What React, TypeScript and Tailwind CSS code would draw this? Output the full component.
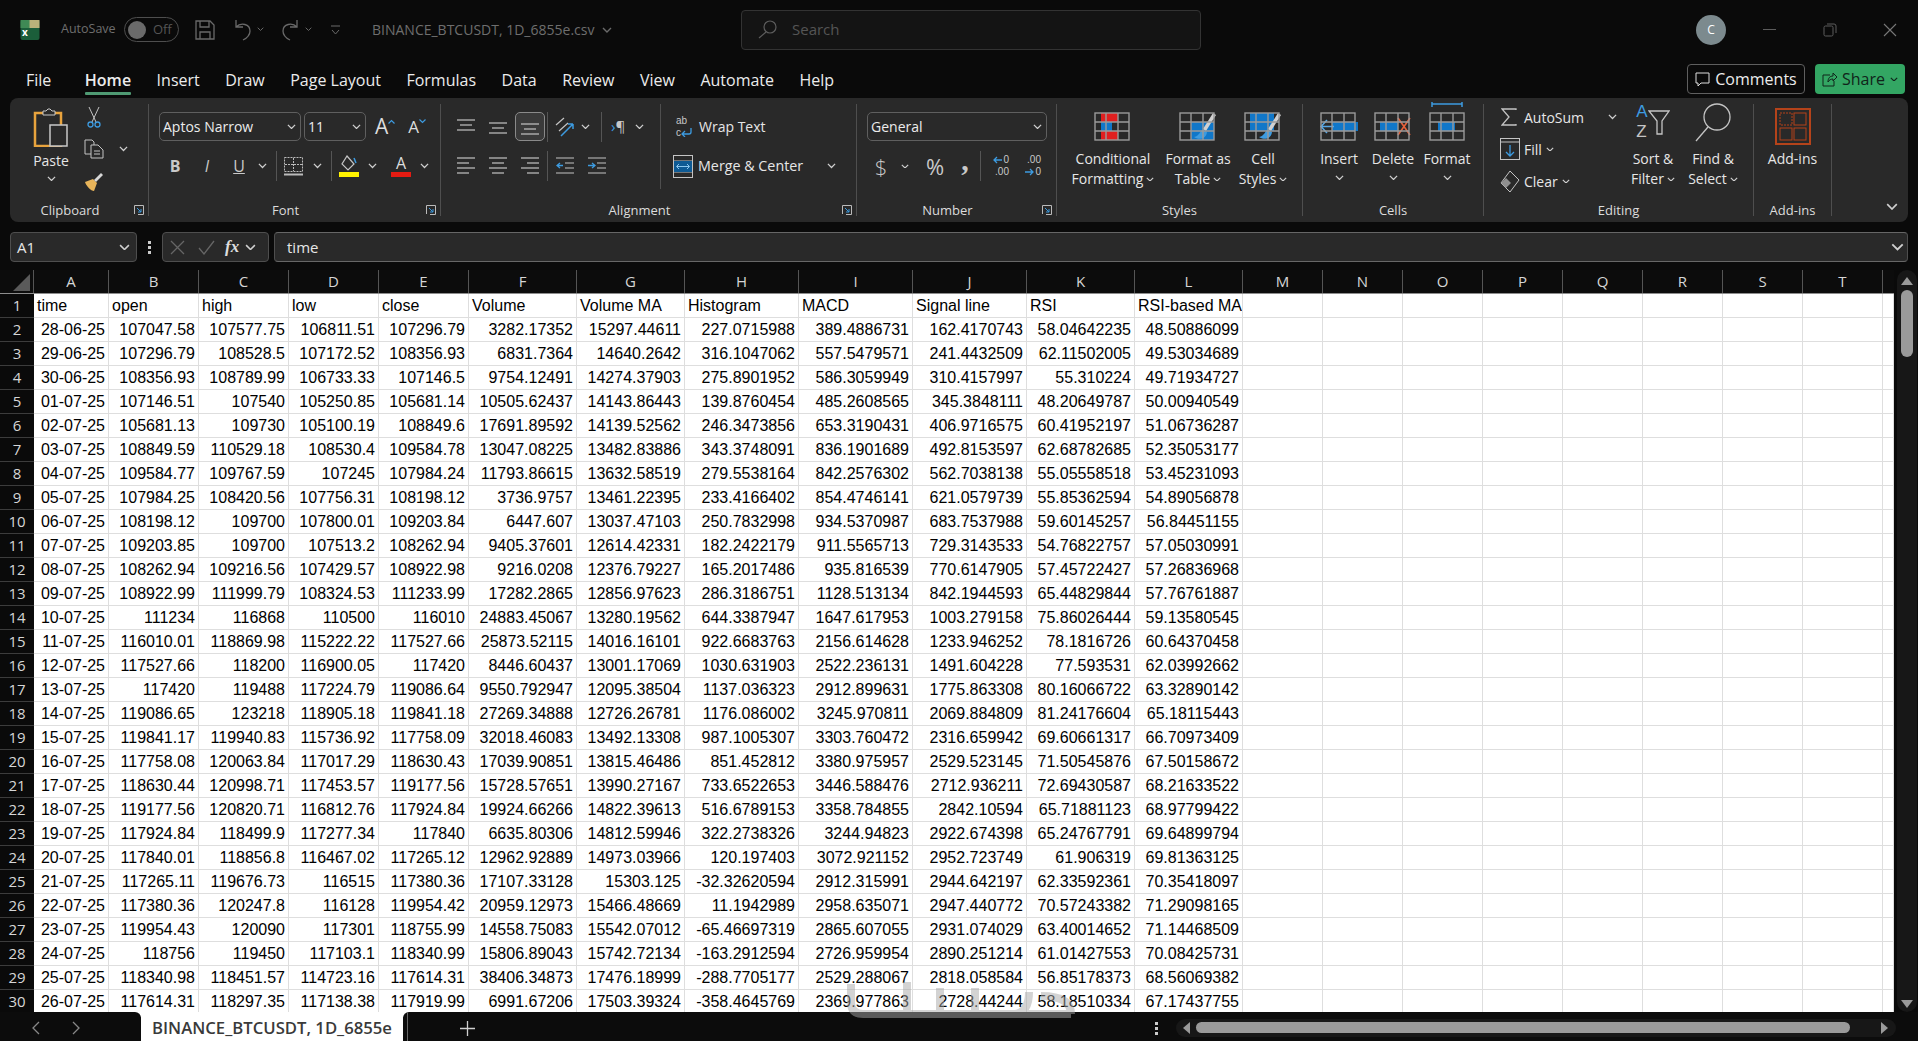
import React from 'react';

const UI = "font-['Open_Sans',sans-serif]";
const CELL = "font-['Liberation_Sans',Arial,sans-serif]";
const COLS = 'grid grid-cols-[34px_75px_90px_90px_90px_90px_108px_108px_114px_114px_114px_108px_108px_repeat(8,80px)_11px]';

const HEAD = ['A', 'B', 'C', 'D', 'E', 'F', 'G', 'H', 'I', 'J', 'K', 'L', 'M', 'N', 'O', 'P', 'Q', 'R', 'S', 'T', ''];
const TITLES = ['time', 'open', 'high', 'low', 'close', 'Volume', 'Volume MA', 'Histogram', 'MACD', 'Signal line', 'RSI', 'RSI-based MA'];

const DATA = `28-06-25 107047.58 107577.75 106811.51 107296.79 3282.17352 15297.44611 227.0715988 389.4886731 162.4170743 58.04642235 48.50886099
29-06-25 107296.79 108528.5 107172.52 108356.93 6831.7364 14640.2642 316.1047062 557.5479571 241.4432509 62.11502005 49.53034689
30-06-25 108356.93 108789.99 106733.33 107146.5 9754.12491 14274.37903 275.8901952 586.3059949 310.4157997 55.310224 49.71934727
01-07-25 107146.51 107540 105250.85 105681.14 10505.62437 14143.86443 139.8760454 485.2608565 345.3848111 48.20649787 50.00940549
02-07-25 105681.13 109730 105100.19 108849.6 17691.89592 14139.52562 246.3473856 653.3190431 406.9716575 60.41952197 51.06736287
03-07-25 108849.59 110529.18 108530.4 109584.78 13047.08225 13482.83886 343.3748091 836.1901689 492.8153597 62.68782685 52.35053177
04-07-25 109584.77 109767.59 107245 107984.24 11793.86615 13632.58519 279.5538164 842.2576302 562.7038138 55.05558518 53.45231093
05-07-25 107984.25 108420.56 107756.31 108198.12 3736.9757 13461.22395 233.4166402 854.4746141 621.0579739 55.85362594 54.89056878
06-07-25 108198.12 109700 107800.01 109203.84 6447.607 13037.47103 250.7832998 934.5370987 683.7537988 59.60145257 56.84451155
07-07-25 109203.85 109700 107513.2 108262.94 9405.37601 12614.42331 182.2422179 911.5565713 729.3143533 54.76822757 57.05030991
08-07-25 108262.94 109216.56 107429.57 108922.98 9216.0208 12376.79227 165.2017486 935.816539 770.6147905 57.45722427 57.26836968
09-07-25 108922.99 111999.79 108324.53 111233.99 17282.2865 12856.97623 286.3186751 1128.513134 842.1944593 65.44829844 57.76761887
10-07-25 111234 116868 110500 116010 24883.45067 13280.19562 644.3387947 1647.617953 1003.279158 75.86026444 59.13580545
11-07-25 116010.01 118869.98 115222.22 117527.66 25873.52115 14016.16101 922.6683763 2156.614628 1233.946252 78.1816726 60.64370458
12-07-25 117527.66 118200 116900.05 117420 8446.60437 13001.17069 1030.631903 2522.236131 1491.604228 77.593531 62.03992662
13-07-25 117420 119488 117224.79 119086.64 9550.792947 12095.38504 1137.036323 2912.899631 1775.863308 80.16066722 63.32890142
14-07-25 119086.65 123218 118905.18 119841.18 27269.34888 12726.26781 1176.086002 3245.970811 2069.884809 81.24176604 65.18115443
15-07-25 119841.17 119940.83 115736.92 117758.09 32018.46083 13492.13308 987.1005307 3303.760472 2316.659942 69.60661317 66.70973409
16-07-25 117758.08 120063.84 117017.29 118630.43 17039.90851 13815.46486 851.452812 3380.975957 2529.523145 71.50545876 67.50158672
17-07-25 118630.44 120998.71 117453.57 119177.56 15728.57651 13990.27167 733.6522653 3446.588476 2712.936211 72.69430587 68.21633522
18-07-25 119177.56 120820.71 116812.76 117924.84 19924.66266 14822.39613 516.6789153 3358.784855 2842.10594 65.71881123 68.97799422
19-07-25 117924.84 118499.9 117277.34 117840 6635.80306 14812.59946 322.2738326 3244.94823 2922.674398 65.24767791 69.64899794
20-07-25 117840.01 118856.8 116467.02 117265.12 12962.92889 14973.03966 120.197403 3072.921152 2952.723749 61.906319 69.81363125
21-07-25 117265.11 119676.73 116515 117380.36 17107.33128 15303.125 -32.32620594 2912.315991 2944.642197 62.33592361 70.35418097
22-07-25 117380.36 120247.8 116128 119954.42 20959.12973 15466.48669 11.1942989 2958.635071 2947.440772 70.57243382 71.29098165
23-07-25 119954.43 120090 117301 118755.99 14558.75083 15542.07012 -65.46697319 2865.607055 2931.074029 63.40014652 71.14468509
24-07-25 118756 119450 117103.1 118340.99 15806.89043 15742.72134 -163.2912594 2726.959954 2890.251214 61.01427553 70.08425731
25-07-25 118340.98 118451.57 114723.16 117614.31 38406.34873 17476.18999 -288.7705177 2529.288067 2818.058584 56.85178373 68.56069382
26-07-25 117614.31 118297.35 117138.38 117919.99 6991.67206 17503.39324 -358.4645769 2369.977863 2728.44244 58.18510334 67.17437755`
  .split('\n')
  .map(r => r.split(' '));

const BLUE = '#3d9be0';
const GREY = '#c4c4c4';

const Chev = ({ className = '', color = '#d0d0d0', w = 9 }: { className?: string; color?: string; w?: number }) => (
  <svg width={w} height={w * 0.6} viewBox="0 0 10 6" className={`shrink-0 ${className}`}>
    <path d="M1 1l4 4 4-4" fill="none" stroke={color} strokeWidth="1.4" />
  </svg>
);

const Sep = ({ className = '' }: { className?: string }) => <div className={`w-px h-[30px] bg-[#555] shrink-0 ${className}`} />;

const Lines = ({ rows, className = '', w = 18 }: { rows: [number, number, number][]; className?: string; w?: number }) => (
  <svg width={w} height="20" viewBox="0 0 18 20" className={`shrink-0 ${className}`}>
    {rows.map((r, i) => (
      <path key={i} d={`M${r[0]} ${r[2]}H${r[1]}`} stroke={GREY} strokeWidth="1.2" />
    ))}
  </svg>
);

const Launcher = () => (
  <svg width="10" height="10" viewBox="0 0 10 10" className="mx-[4px] mt-[5px] shrink-0">
    <path d="M.5 9V.5H9.5V9.5H4" fill="none" stroke="#bbb" />
    <path d="M3 3l4 4M7 4v3H4" fill="none" stroke={BLUE} />
  </svg>
);

const Footer = ({ label, launcher }: { label: string; launcher?: boolean }) => (
  <div className="h-[20px] pt-[4px] flex text-[13px] leading-[20px] text-[#dcdcdc]">
    <span className="flex-1 text-center">{label}</span>
    {launcher && <Launcher />}
  </div>
);

const Combo = ({ text, className }: { text: string; className: string }) => (
  <div className={`h-[29px] flex items-center justify-between pl-[3px] pr-[4px] border border-[#5f5f5f] rounded-[5px] text-[14px] text-[#ececec] ${className}`}>
    <span>{text}</span>
    <Chev />
  </div>
);

const BigBtn = ({ w, icon, lines, arrow }: { w: string; icon: React.ReactNode; lines: string[]; arrow?: 'inline' | 'below' }) => (
  <div className={`flex flex-col items-center text-[14px] leading-[20px] text-[#e6e6e6] ${w}`}>
    <div className="h-[45px] flex items-end pb-[9px]">{icon}</div>
    {lines.map((l, i) => (
      <div key={l} className="flex items-center gap-[3px] whitespace-nowrap">
        {l}
        {arrow === 'inline' && i === lines.length - 1 && <Chev w={8} />}
      </div>
    ))}
    {arrow === 'below' && <Chev className="mt-[6px]" />}
  </div>
);

const GridIcon = ({ children }: { children?: React.ReactNode }) => (
  <svg width="38" height="40" viewBox="0 0 38 40" className="-mb-[1px]">
    {children}
    <g fill="none" stroke="#9a9a9a" strokeWidth="1.4">
      <rect x="1" y="12" width="34" height="27" />
      <path d="M12 12v27M24 12v27M1 21h34M1 30h34" />
    </g>
  </svg>
);

const Brush = () => (
  <g>
    <path d="M37 14L27 30l-3-2L34 12z" fill="#d0d0d0" />
    <path d="M24 29c-3 0-3 6-9 7 4 3 12 3 13-5z" fill={BLUE} />
  </g>
);

function TitleBar() {
  return (
    <div className="h-[50px] pt-[9px] flex items-center text-[#6e6e6e]">
      <svg width="20" height="20" viewBox="0 0 20 20" className="ml-[20px] shrink-0">
        <rect x="0.5" width="19" height="20" rx="2" fill="#1b5e3a" />
        <rect x="6" width="13.5" height="8" fill="#b9b27a" />
        <rect x="0.5" y="0" width="9" height="8" fill="#3f8a55" />
        <text x="2" y="16" fontSize="10" fontWeight="700" fill="#fff">x</text>
      </svg>
      <span className="ml-[21px] w-[54px] text-[12.5px]">AutoSave</span>
      <div className="ml-[9px] w-[55px] h-[25px] rounded-full border border-[#4e4e4e] flex items-center pl-[3px] gap-[7px]">
        <div className="w-[18px] h-[18px] rounded-full bg-[#6a6a6a]" />
        <span className="text-[13px] text-[#555]">Off</span>
      </div>
      <svg width="20" height="20" viewBox="0 0 20 20" className="ml-[16px]" fill="none" stroke="#6a6a6a" strokeWidth="1.3">
        <path d="M1 1h14l4 4v14H1zM5 1v6h9V1M5 19v-7h10v7" />
      </svg>
      <svg width="25" height="22" viewBox="0 0 25 22" className="ml-[15px]" fill="none" stroke="#6a6a6a" strokeWidth="1.3">
        <path d="M6 1v7h7M6 8c5-5 14-3 14 4 0 4-3 7-7 9" />
      </svg>
      <Chev className="ml-[2px]" color="#6a6a6a" w={7} />
      <svg width="25" height="22" viewBox="0 0 25 22" className="ml-[14px]" fill="none" stroke="#6a6a6a" strokeWidth="1.3">
        <path d="M19 1v7h-7M19 8C14 3 5 5 5 12c0 4 3 7 7 9" />
      </svg>
      <Chev className="ml-[2px]" color="#6a6a6a" w={7} />
      <svg width="9" height="10" viewBox="0 0 9 10" className="ml-[19px]" fill="none" stroke="#6a6a6a">
        <path d="M0 1h9M1 5l3.500 4 3.500-4" />
      </svg>
      <span className="ml-[32px] w-[226px] text-[14px] whitespace-nowrap">BINANCE_BTCUSDT, 1D_6855e.csv</span>
      <Chev className="ml-[4px]" color="#6a6a6a" w={10} />
      <div className="ml-[129px] w-[460px] h-[40px] bg-[#141414] border border-[#333] rounded-[4px] flex items-center pl-[16px]">
        <svg width="19" height="19" viewBox="0 0 19 19" fill="none" stroke="#5d5d5d" strokeWidth="1.2">
          <circle cx="12" cy="7" r="6" />
          <path d="M8 12l-7 6" />
        </svg>
        <span className="ml-[15px] text-[15px] text-[#555]">Search</span>
      </div>
      <div className="ml-[495px] w-[30px] h-[30px] rounded-full bg-[#7c8a8e] flex items-center justify-center text-[12px] text-white">C</div>
      <div className="ml-[37px] w-[13px] h-px bg-[#5c5c5c]" />
      <svg width="14" height="14" viewBox="0 0 14 14" className="ml-[47px]" fill="none" stroke="#5c5c5c">
        <rect x="1" y="3" width="9" height="10" rx="1.500" />
        <path d="M4 1h7a2 2 0 012 2v7" />
      </svg>
      <svg width="14" height="14" viewBox="0 0 14 14" className="ml-[46px]" fill="none" stroke="#777" strokeWidth="1.100">
        <path d="M1 1l12 12M13 1L1 13" />
      </svg>
    </div>
  );
}

function TabRow() {
  const tabs = ['File', 'Home', 'Insert', 'Draw', 'Page Layout', 'Formulas', 'Data', 'Review', 'View', 'Automate', 'Help'];
  return (
    <div className="h-[48px] flex pl-[26px] gap-[25.5px] text-[16px] text-[#ececec]">
      {tabs.map(t => (
        <div key={t} className={`flex flex-col pt-[18px] ${t === 'File' ? 'mr-[8px]' : ''}`}>
          <span className={`leading-[24px] whitespace-nowrap ${t === 'Home' ? 'font-semibold' : ''}`}>{t}</span>
          {t === 'Home' && <div className="h-[3px] bg-[#4f9a73] rounded-[1px]" />}
        </div>
      ))}
      <div className="ml-auto flex gap-[10px] pt-[14px] pr-[13px]">
        <div className="w-[118px] h-[30px] border border-[#5f5f5f] rounded-[4px] flex items-center justify-center gap-[5px] text-[16px]">
          <svg width="15" height="15" viewBox="0 0 15 15" fill="none" stroke="#ddd">
            <path d="M1 1h13v10H6l-3 3v-3H1z" />
          </svg>
          Comments
        </div>
        <div className="w-[90px] h-[30px] bg-[#33a663] rounded-[4px] flex items-center justify-center gap-[5px] text-[16px] text-[#10241a]">
          <svg width="15" height="16" viewBox="0 0 15 16" fill="none" stroke="#10241a">
            <path d="M8 4H1v11h11v-5M6 11c0-4 2-6 5-6V2l4 4-4 4V8c-2 0-4 1-5 3z" />
          </svg>
          Share
          <Chev color="#10241a" w={8} />
        </div>
      </div>
    </div>
  );
}

function Clipboard() {
  return (
    <div className="w-[139px] flex flex-col border-r border-[#4e4e4e] text-[#e6e6e6]">
      <div className="flex-1 flex">
        <div className="w-[74px] flex flex-col items-center pl-[8px] pt-[4px] text-[14px] leading-[20px]">
          <svg width="36" height="39" viewBox="0 0 36 39">
            <path d="M2 5h26v33H2z" fill="none" stroke="#e8a33d" strokeWidth="2.500" />
            <path d="M10 6V3h3l2-2h2l2 2h3v4H10z" fill="#2a2a2a" stroke="#c8c8c8" />
            <rect x="17" y="17" width="17" height="21" fill="#2a2a2a" stroke="#c8c8c8" strokeWidth="1.500" />
          </svg>
          <span className="mt-[4px]">Paste</span>
          <Chev className="mt-[5px]" />
        </div>
        <div className="flex flex-col pt-[3px]">
          <svg width="14" height="21" viewBox="0 0 14 21" className="ml-[3px]" fill="none">
            <path d="M2 0l7 15M12 0L5 15" stroke={GREY} />
            <circle cx="3.500" cy="17.500" r="2.500" stroke={BLUE} strokeWidth="1.300" />
            <circle cx="10.500" cy="17.500" r="2.500" stroke={BLUE} strokeWidth="1.300" />
          </svg>
          <div className="flex items-center mt-[11px]">
            <svg width="20" height="20" viewBox="0 0 20 20" fill="none" stroke={GREY}>
              <path d="M7 15H1V1h7l2 2v3M7 6h7l5 5v8H7z" />
              <path d="M10 12h6M10 15h6" />
            </svg>
            <Chev className="ml-[15px]" />
          </div>
          <svg width="20" height="20" viewBox="0 0 20 20" className="mt-[13px]">
            <path d="M1 10l8-3 4 4-3 8C7 19 2 14 1 10z" fill="#e8b45a" />
            <path d="M10 8l7-7 2 2-7 7z" fill="#d8d8d8" />
          </svg>
        </div>
      </div>
      <Footer label="Clipboard" launcher />
    </div>
  );
}

function FontGroup() {
  return (
    <div className="w-[292px] flex flex-col border-r border-[#4e4e4e] text-[#e6e6e6]">
      <div className="flex-1 pt-[8px]">
        <div className="flex items-center pl-[10px]">
          <Combo text="Aptos Narrow" className="w-[142px]" />
          <Combo text="11" className="w-[62px] ml-[3px]" />
          <span className="ml-[9px] text-[21px] leading-none text-[#ddd]">A</span>
          <svg width="7" height="5" viewBox="0 0 7 5" className="mb-[10px]" fill="none" stroke={BLUE} strokeWidth="1.200"><path d="M.5 4.500l3-3 3 3" /></svg>
          <span className="ml-[13px] text-[17px] leading-none text-[#ddd]">A</span>
          <svg width="7" height="5" viewBox="0 0 7 5" className="mb-[10px]" fill="none" stroke={BLUE} strokeWidth="1.200"><path d="M.5.500l3 3 3-3" /></svg>
        </div>
        <div className="flex items-center h-[30px] mt-[10px]">
          <span className="ml-[20px] w-[12px] text-center text-[16px] font-bold text-[#c8c8c8]">B</span>
          <span className="ml-[20px] w-[12px] text-center text-[16px] italic text-[#c8c8c8]">I</span>
          <span className="ml-[20px] w-[12px] text-center text-[16px] underline text-[#c8c8c8]">U</span>
          <Chev className="ml-[13px]" />
          <Sep className="ml-[9px]" />
          <svg width="19" height="19" viewBox="0 0 19 19" className="ml-[7px]" fill="none" stroke="#bbb">
            <path d="M.5.500h18v14H.5z" strokeDasharray="2 1" />
            <path d="M9.500 1v13M1 7.500h17" strokeDasharray="2 1" />
            <path d="M0 17.500h19" strokeWidth="2" />
          </svg>
          <Chev className="ml-[10px]" />
          <Sep className="ml-[9px]" />
          <svg width="20" height="22" viewBox="0 0 20 22" className="ml-[7px]">
            <path d="M8 1l7 8-6 6-6-6z" fill="none" stroke={GREY} strokeWidth="1.200" />
            <path d="M15 3l2 5" stroke={BLUE} strokeWidth="1.500" />
            <rect y="17" width="20" height="5" fill="#fff200" />
          </svg>
          <Chev className="ml-[9px]" />
          <div className="ml-[14px] w-[20px] flex flex-col items-center">
            <span className="text-[16px] leading-[17px] text-[#ddd]">A</span>
            <div className="w-[20px] h-[5px] bg-[#e51b12]" />
          </div>
          <Chev className="ml-[9px]" />
        </div>
      </div>
      <Footer label="Font" launcher />
    </div>
  );
}

function Alignment() {
  return (
    <div className="w-[416px] flex flex-col border-r border-[#4e4e4e] text-[#e6e6e6]">
      <div className="flex-1 flex">
        <div className="w-[220px] pt-[8px] border-r border-[#4e4e4e] h-[85px]">
          <div className="flex items-center h-[29px]">
            <Lines className="ml-[16px]" rows={[[0, 18, 3], [3, 15, 8], [0, 18, 13]]} />
            <Lines className="ml-[14px]" rows={[[0, 18, 6], [3, 15, 11], [0, 18, 16]]} />
            <div className="ml-[8px] w-[30px] h-[29px] rounded-[5px] border border-[#8a8a8a] bg-[#3a3a3a] flex items-center justify-center">
              <Lines rows={[[0, 18, 7], [3, 15, 12], [0, 18, 17]]} />
            </div>
            <Sep className="ml-[2px]" />
            <svg width="20" height="20" viewBox="0 0 20 20" className="ml-[7px]" fill="none">
              <path d="M1 8l8-7M4 14l9-8" stroke={GREY} strokeWidth="1.200" />
              <path d="M6 19L18 7M18 7v5M18 7h-5" stroke={BLUE} strokeWidth="1.500" />
            </svg>
            <Chev className="ml-[6px]" />
            <Sep className="ml-[11px]" />
            <span className="ml-[9px] text-[15px] text-[#c8c8c8] whitespace-nowrap"><span className="text-[#3d9be0]">›</span>¶</span>
            <Chev className="ml-[10px]" />
          </div>
          <div className="flex items-center h-[30px] mt-[10px]">
            <Lines className="ml-[16px]" rows={[[0, 18, 2], [0, 12, 7], [0, 18, 12], [0, 12, 17]]} />
            <Lines className="ml-[14px]" rows={[[0, 18, 2], [3, 15, 7], [0, 18, 12], [3, 15, 17]]} />
            <Lines className="ml-[14px]" rows={[[0, 18, 2], [6, 18, 7], [0, 18, 12], [6, 18, 17]]} />
            <Sep className="ml-[8px]" />
            <svg width="18" height="20" viewBox="0 0 18 20" className="ml-[8px]" fill="none">
              <path d="M0 2h18M9 7h9M9 12h9M0 17h18" stroke={GREY} strokeWidth="1.200" />
              <path d="M7 9.500H1M4 7L1 9.500 4 12" stroke={BLUE} strokeWidth="1.300" />
            </svg>
            <svg width="18" height="20" viewBox="0 0 18 20" className="ml-[14px]" fill="none">
              <path d="M0 2h18M9 7h9M9 12h9M0 17h18" stroke={GREY} strokeWidth="1.200" />
              <path d="M0 9.500h6M4 7l3 2.500L4 12" stroke={BLUE} strokeWidth="1.300" />
            </svg>
          </div>
        </div>
        <div className="pt-[8px] flex-1">
          <div className="flex items-center h-[29px] pl-[15px] text-[14px]">
            <div className="w-[18px] flex flex-col text-[10px] leading-[12px] text-[#c8c8c8] font-['Liberation_Sans',sans-serif]">
              <span>ab</span>
              <div className="flex items-center">
                <span>c</span>
                <svg width="11" height="9" viewBox="0 0 11 9" fill="none" stroke={BLUE} strokeWidth="1.300">
                  <path d="M10 0v4a2 2 0 01-2 2H1M4 3L1 6l3 3" />
                </svg>
              </div>
            </div>
            <span className="ml-[5px]">Wrap Text</span>
          </div>
          <div className="flex items-center h-[30px] mt-[10px] pl-[12px] text-[14px]">
            <svg width="20" height="23" viewBox="0 0 20 23" fill="none">
              <rect x=".5" y=".5" width="19" height="22" stroke={GREY} />
              <path d="M0 6h20M0 17h20" stroke={GREY} />
              <rect x="1" y="6" width="18" height="11" fill="#0e5a94" />
              <path d="M4 11.500h12M6 9l-2.500 2.500L6 14M14 9l2.500 2.500L14 14" stroke="#8cc6ee" />
            </svg>
            <span className="ml-[5px] w-[118px] text-[14.3px] whitespace-nowrap">Merge &amp; Center</span>
            <Chev className="ml-[11px]" />
          </div>
        </div>
      </div>
      <Footer label="Alignment" launcher />
    </div>
  );
}

function NumberGroup() {
  return (
    <div className="w-[200px] flex flex-col border-r border-[#4e4e4e] text-[#e6e6e6]">
      <div className="flex-1 pt-[8px]">
        <Combo text="General" className="w-[180px] ml-[10px]" />
        <div className="flex items-center h-[30px] mt-[10px] text-[#c8c8c8]">
          <span className="ml-[17px] w-[14px] text-center text-[22px] font-light">$</span>
          <Chev className="ml-[13px]" w={8} />
          <span className="ml-[14px] w-[24px] text-center text-[22px]">%</span>
          <span className="ml-[13px] w-[10px] text-center text-[30px] leading-[18px] font-bold font-['Liberation_Serif',serif] -mt-[12px]">,</span>
          <Sep className="ml-[10px]" />
          <div className="ml-[8px] w-[20px] flex flex-col items-end text-[10px] leading-[12px] font-['Liberation_Sans',sans-serif]">
            <div className="flex items-center gap-[1px]">
              <svg width="9" height="8" viewBox="0 0 9 8" fill="none" stroke={BLUE} strokeWidth="1.300"><path d="M9 4H1M4 1L1 4l3 3" /></svg>
              <span>0</span>
            </div>
            <span>.00</span>
          </div>
          <div className="ml-[12px] w-[20px] flex flex-col items-end text-[10px] leading-[12px] font-['Liberation_Sans',sans-serif]">
            <span>.00</span>
            <div className="flex items-center gap-[1px]">
              <svg width="9" height="8" viewBox="0 0 9 8" fill="none" stroke={BLUE} strokeWidth="1.300"><path d="M0 4h8M5 1l3 3-3 3" /></svg>
              <span>0</span>
            </div>
          </div>
        </div>
      </div>
      <Footer label="Number" launcher />
    </div>
  );
}

function Styles() {
  return (
    <div className="w-[246px] flex flex-col border-r border-[#4e4e4e]">
      <div className="flex-1 flex pl-[11px]">
        <BigBtn
          w="w-[90px]"
          arrow="inline"
          lines={['Conditional', 'Formatting']}
          icon={
            <GridIcon>
              <rect x="7" y="12" width="17" height="9" fill="#e01f1f" />
              <rect x="7" y="21" width="11" height="9" fill="#1077c9" />
              <rect x="7" y="30" width="17" height="9" fill="#e01f1f" />
            </GridIcon>
          }
        />
        <BigBtn
          w="w-[80px]"
          arrow="inline"
          lines={['Format as', 'Table']}
          icon={
            <GridIcon>
              <rect x="12" y="21" width="23" height="18" fill="#1077c9" />
              <Brush />
            </GridIcon>
          }
        />
        <BigBtn
          w="w-[50px]"
          arrow="inline"
          lines={['Cell', 'Styles']}
          icon={
            <GridIcon>
              <rect x="6" y="12" width="24" height="18" fill="#1077c9" />
              <Brush />
            </GridIcon>
          }
        />
      </div>
      <Footer label="Styles" />
    </div>
  );
}

function Cells() {
  return (
    <div className="w-[181px] flex flex-col border-r border-[#4e4e4e]">
      <div className="flex-1 flex pl-[9px]">
        <BigBtn
          w="w-[54px]"
          arrow="below"
          lines={['Insert']}
          icon={
            <GridIcon>
              <rect x="12" y="21" width="26" height="9" fill="#1077c9" />
              <path d="M14 25.500H1M7 19l-6 6.500L7 32" fill="none" stroke="#58a8e6" strokeWidth="1.600" />
            </GridIcon>
          }
        />
        <BigBtn
          w="w-[54px]"
          arrow="below"
          lines={['Delete']}
          icon={
            <GridIcon>
              <rect x="6" y="21" width="18" height="9" fill="#1077c9" />
              <path d="M24 17l12 17M36 17L24 34" stroke="#e8613a" strokeWidth="1.600" />
            </GridIcon>
          }
        />
        <BigBtn
          w="w-[54px]"
          arrow="below"
          lines={['Format']}
          icon={
            <svg width="36" height="40" viewBox="0 0 36 40" className="-mb-[1px]">
              <path d="M3 1v5M33 1v5M3 3h30" stroke={BLUE} strokeWidth="1.500" />
              <rect x="9" y="21" width="17" height="9" fill="#1077c9" />
              <g fill="none" stroke="#9a9a9a" strokeWidth="1.4">
                <rect x="1" y="12" width="34" height="27" />
                <path d="M12 12v27M24 12v27M1 21h34M1 30h34" />
              </g>
            </svg>
          }
        />
      </div>
      <Footer label="Cells" />
    </div>
  );
}

function Editing() {
  const row = 'h-[26px] flex items-center text-[14px] text-[#e6e6e6]';
  return (
    <div className="w-[270px] flex flex-col border-r border-[#4e4e4e]">
      <div className="flex-1 flex">
        <div className="w-[139px] pl-[17px] flex flex-col gap-[6px]">
          <div className={row}>
            <svg width="16" height="18" viewBox="0 0 16 18" fill="none" stroke={GREY} strokeWidth="1.300">
              <path d="M15 2V1H1l7 8-7 8h14v-1" />
            </svg>
            <span className="ml-[7px] w-[84px]">AutoSum</span>
            <Chev />
          </div>
          <div className={row}>
            <svg width="20" height="22" viewBox="0 0 20 22" className="-ml-[1px]" fill="none">
              <rect x=".5" y=".5" width="19" height="21" stroke={GREY} />
              <path d="M0 4h20" stroke={GREY} />
              <path d="M10 7v11M6 14l4 4 4-4" stroke={BLUE} strokeWidth="1.300" />
            </svg>
            <span className="ml-[4px]">Fill</span>
            <Chev className="ml-[4px]" w={8} />
          </div>
          <div className={row}>
            <svg width="20" height="23" viewBox="0 0 20 23" className="-ml-[1px]" fill="none">
              <path d="M10 1l9 9-9 12-9-9z" stroke={GREY} />
              <path d="M6 18l-5-5 5-5 5 5z" fill="#8f8f8f" />
            </svg>
            <span className="ml-[4px]">Clear</span>
            <Chev className="ml-[4px]" w={8} />
          </div>
        </div>
        <BigBtn
          w="w-[60px]"
          arrow="inline"
          lines={['Sort &', 'Filter']}
          icon={
            <div className="flex items-end -mb-[2px]">
              <div className="flex flex-col text-[17px] leading-[20px] font-['Liberation_Sans',sans-serif]">
                <span className="text-[#3d9be0]">A</span>
                <span className="text-[#c4c4c4]">Z</span>
              </div>
              <svg width="22" height="25" viewBox="0 0 22 25" fill="none" className="mb-[7px]">
                <path d="M1 1h20l-7 10v13H9V11z" stroke={GREY} strokeWidth="1.300" />
              </svg>
            </div>
          }
        />
        <BigBtn
          w="w-[60px]"
          arrow="inline"
          lines={['Find &', 'Select']}
          icon={
            <svg width="36" height="40" viewBox="0 0 36 40" fill="none" stroke={GREY} strokeWidth="1.300" className="-mb-[2px]">
              <circle cx="22" cy="15" r="13" />
              <path d="M13 25L1 39" />
            </svg>
          }
        />
      </div>
      <Footer label="Editing" />
    </div>
  );
}

function AddIns() {
  return (
    <div className="w-[78px] flex flex-col border-r border-[#4e4e4e]">
      <div className="flex-1 flex flex-col items-center text-[14px] leading-[20px] text-[#e6e6e6]">
        <svg width="36" height="37" viewBox="0 0 36 37" className="mt-[4px]" fill="none" stroke="#b5431a">
          <rect x="1" y="1" width="34" height="35" strokeWidth="2" />
          <rect x="5" y="5" width="12" height="12" strokeDasharray="2 1" />
          <rect x="19" y="5" width="12" height="12" />
          <rect x="5" y="20" width="12" height="12" />
          <rect x="19" y="20" width="12" height="12" />
        </svg>
        <span className="mt-[4px]">Add-ins</span>
      </div>
      <Footer label="Add-ins" />
    </div>
  );
}

function Ribbon() {
  return (
    <div className={`mx-[10px] h-[124px] bg-[#292929] rounded-[8px] py-[6px] flex ${UI}`}>
      <Clipboard />
      <FontGroup />
      <Alignment />
      <NumberGroup />
      <Styles />
      <Cells />
      <Editing />
      <AddIns />
      <div className="flex-1 flex items-end justify-end pr-[10px] pb-[6px]">
        <Chev w={12} />
      </div>
    </div>
  );
}

function FormulaBar() {
  return (
    <div className="mt-[10px] mx-[10px] h-[30px] flex text-[15px] text-[#e6e6e6]">
      <div className="w-[127px] bg-[#292929] border border-[#4e4e4e] rounded-[4px] flex items-center justify-between pl-[6px] pr-[6px]">
        A1
        <Chev w={11} />
      </div>
      <div className="w-[25px] flex flex-col items-center justify-center gap-[2px]">
        <div className="w-[3px] h-[3px] bg-[#ccc]" />
        <div className="w-[3px] h-[3px] bg-[#ccc]" />
        <div className="w-[3px] h-[3px] bg-[#ccc]" />
      </div>
      <div className="w-[107px] bg-[#292929] border border-[#4e4e4e] rounded-[4px] flex items-center pl-[7px]">
        <svg width="15" height="15" viewBox="0 0 15 15" fill="none" stroke="#666" strokeWidth="1.300">
          <path d="M1 1l13 13M14 1L1 14" />
        </svg>
        <svg width="17" height="15" viewBox="0 0 17 15" className="ml-[13px]" fill="none" stroke="#666" strokeWidth="1.300">
          <path d="M1 8l5 6L16 1" />
        </svg>
        <span className="ml-[10px] text-[17px] italic font-semibold font-['Liberation_Serif',serif] text-[#ddd]">fx</span>
        <Chev className="ml-[6px]" w={11} />
      </div>
      <div className="ml-[5px] flex-1 bg-[#292929] border border-[#4e4e4e] border-t-[#666] border-b-[#666] rounded-[4px] flex items-center justify-between pl-[12px] pr-[3px]">
        time
        <Chev w={13} />
      </div>
    </div>
  );
}

function Sheet() {
  return (
    <div className="mt-[8px] h-[742px] flex">
      <div className="w-[1894px] overflow-hidden">
        <div className={`${COLS} h-[24px] bg-[#0c0c0c] border-b border-[#8d8d8d] text-[15px] text-[#d6d6d6] ${UI}`}>
          <div className="border-r border-[#555] flex items-end justify-end pr-[3px] pb-[2px]">
            <div className="w-[17px] h-[17px] bg-[#5a5a5a] [clip-path:polygon(100%_0,100%_100%,0_100%)]" />
          </div>
          {HEAD.map((h, i) => (
            <div key={i} className="border-r border-[#555] flex items-center justify-center leading-none last:border-r-0">{h}</div>
          ))}
        </div>
        <div className={`bg-white text-[16px] text-black ${CELL}`}>
          {[TITLES, ...DATA].map((row, r) => (
            <div key={r} className={`${COLS} h-[24px]`}>
              <div className={`bg-[#0a0a0a] border-b border-[#3c3c3c] flex items-center justify-center text-[15px] text-[#d6d6d6] ${UI}`}>{r + 1}</div>
              {Array.from({ length: 21 }).map((_, c) => (
                <div
                  key={c}
                  className={`border-b border-r border-[#dedede] px-[3px] pt-[1px] leading-[22px] overflow-hidden whitespace-nowrap ${r === 0 ? 'text-left' : 'text-right'}`}
                >
                  {row[c] ?? ''}
                </div>
              ))}
            </div>
          ))}
        </div>
      </div>
      <div className="flex-1 pl-[3px] pr-[1px]">
        <div className="h-full bg-[#171717] rounded-full flex flex-col items-center pt-[7px] pb-[4px]">
          <div className="w-0 h-0 border-x-[6px] border-x-transparent border-b-[8px] border-b-[#9a9a9a]" />
          <div className="w-[12px] h-[67px] mt-[5px] bg-[#9a9a9a] rounded-full" />
          <div className="mt-auto w-0 h-0 border-x-[6px] border-x-transparent border-t-[8px] border-t-[#9a9a9a]" />
        </div>
      </div>
    </div>
  );
}

function SheetTabs() {
  return (
    <div className={`h-[29px] bg-white flex ${UI}`}>
      <div className="w-[141px] bg-[#0c0c0c] rounded-tr-[6px] flex items-center pl-[31px] gap-[32px] pt-[2px]">
        <svg width="9" height="14" viewBox="0 0 9 14" fill="none" stroke="#888" strokeWidth="1.300"><path d="M8 1L2 7l6 6" /></svg>
        <svg width="9" height="14" viewBox="0 0 9 14" fill="none" stroke="#888" strokeWidth="1.300"><path d="M1 1l6 6-6 6" /></svg>
      </div>
      <div className="w-[262px] flex items-center justify-center pt-[2px] text-[16.700px] font-semibold text-[#3a3a3a] whitespace-nowrap">BINANCE_BTCUSDT, 1D_6855e</div>
      <div className="flex-1 bg-[#0c0c0c] rounded-tl-[6px] flex items-center">
        <div className="ml-[4px] w-px h-full bg-[#666]" />
        <svg width="15" height="15" viewBox="0 0 15 15" className="ml-[52px] mt-[3px]" stroke="#d0d0d0" strokeWidth="1.300"><path d="M7.500 0v15M0 7.500h15" /></svg>
        <div className="ml-[680px] flex flex-col gap-[2px] mt-[3px]">
          <div className="w-[3px] h-[3px] bg-[#ccc]" />
          <div className="w-[3px] h-[3px] bg-[#ccc]" />
          <div className="w-[3px] h-[3px] bg-[#ccc]" />
        </div>
        <div className="ml-[18px] w-[720px] h-[18px] mt-[2px] bg-[#171717] rounded-full flex items-center pl-[7px]">
          <div className="w-0 h-0 border-y-[6px] border-y-transparent border-r-[7px] border-r-[#9a9a9a]" />
          <div className="ml-[6px] w-[654px] h-[11px] bg-[#9a9a9a] rounded-full" />
          <div className="ml-[31px] w-0 h-0 border-y-[6px] border-y-transparent border-l-[7px] border-l-[#9a9a9a]" />
        </div>
      </div>
    </div>
  );
}

export default function App() {
  return (
    <div className={`relative w-[1918px] h-[1041px] overflow-hidden bg-[#0a0a0a] ${UI}`}>
      <TitleBar />
      <TabRow />
      <Ribbon />
      <FormulaBar />
      <Sheet />
      <SheetTabs />
      {/* faint logo stamped on the capture */}
      <svg width="232" height="48" viewBox="0 0 232 48" className="absolute left-[845px] top-[974px] pointer-events-none opacity-50" fill="none" stroke="#a8a8a8" strokeWidth="8">
        <path d="M6 10v18q0 12 12 12h208" strokeLinejoin="round" />
        <path d="M62 8v32M95 14v26M130 14v26M170 40q14-2 14-22" />
        <path d="M196 22q30 0 30 18" />
      </svg>
    </div>
  );
}
